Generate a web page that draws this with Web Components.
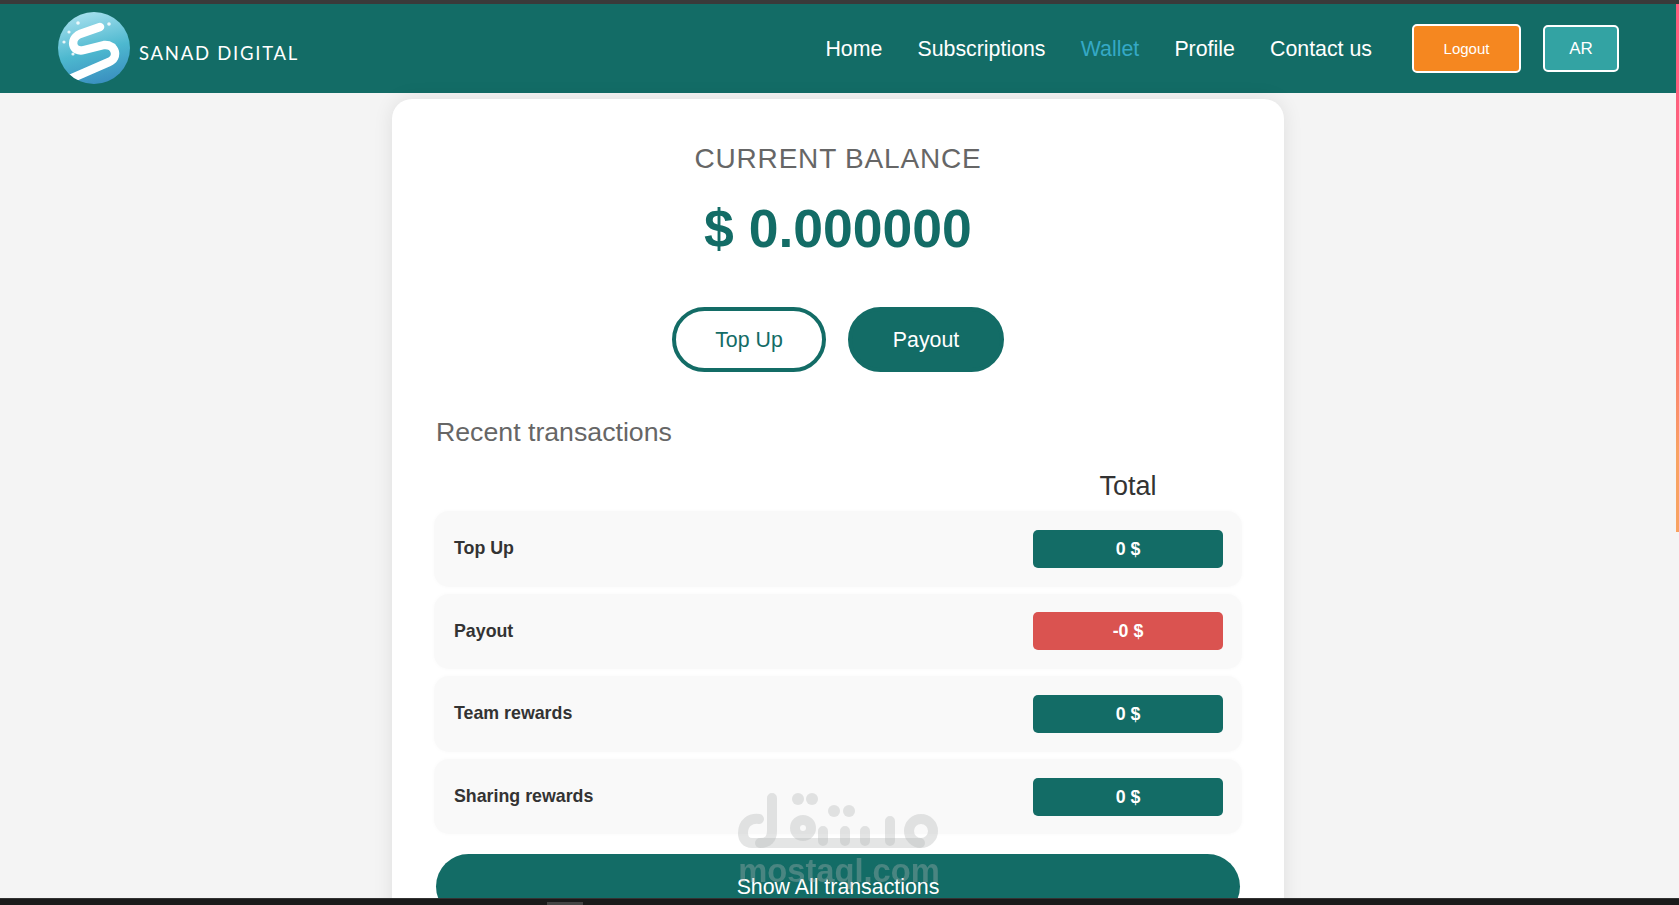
<!DOCTYPE html>
<html>
<head>
<meta charset="utf-8">
<title>Wallet</title>
<style>
    html, body {
        margin: 0;
        height: 100%;
        overflow: hidden;
        background: #f4f4f4;
        font-family: "Liberation Sans", Arial, sans-serif;
    }
    body {
        position: relative;
        padding-right: 3px;
        box-sizing: border-box;
        border-top: 4px solid #3a3a3a;
    }
</style>
</head>
<body>
    <site-header>
        <nav-link href="#">Home</nav-link>
        <nav-link href="#">Subscriptions</nav-link>
        <nav-link href="#" active>Wallet</nav-link>
        <nav-link href="#">Profile</nav-link>
        <nav-link href="#">Contact us</nav-link>
    </site-header>

    <wallet-card>
        <balance-box amount="$ 0.000000"></balance-box>
        <recent-list>
            <transaction-row label="Top Up" value="0 $"></transaction-row>
            <transaction-row label="Payout" value="-0 $" negative></transaction-row>
            <transaction-row label="Team rewards" value="0 $"></transaction-row>
            <transaction-row label="Sharing rewards" value="0 $"></transaction-row>
        </recent-list>
    </wallet-card>

    <page-chrome></page-chrome>

<script>
class SiteHeader extends HTMLElement {
    constructor() {
        super();
        this.shadowDOM = this.attachShadow({ mode: 'open' });
    }

    connectedCallback() {
        this.shadowDOM.innerHTML = `
            <style>
                :host {
                    display: flex;
                    align-items: center;
                    height: 89px;
                    background-color: #136c66;
                    padding: 0 57px 0 58px;
                    box-sizing: border-box;
                }
                .logo {
                    display: flex;
                    align-items: center;
                    flex: 1;
                }
                .logo svg {
                    width: 72px;
                    height: 72px;
                    margin-top: -1px;
                }
                .logo span {
                    margin: 9px 0 0 9px;
                    color: #fff;
                    font: 400 18.5px Lato, sans-serif;
                    letter-spacing: 1.75px;
                }
                nav {
                    display: flex;
                    gap: 35.2px;
                    margin-right: 40px;
                    margin-top: 1px;
                }
                .btn {
                    display: flex;
                    align-items: center;
                    justify-content: center;
                    box-sizing: border-box;
                    border: 2px solid #fff;
                    border-radius: 5px;
                    color: #fff;
                }
                .logout {
                    width: 109px;
                    height: 49px;
                    margin-top: -1px;
                    background-color: #f58720;
                    font-size: 15px;
                }
                .lang {
                    width: 76px;
                    height: 47px;
                    margin-left: 22px;
                    background-color: #33a3a3;
                    font-size: 17px;
                }
            </style>
            <div class="logo">
                <svg viewBox="0 0 72 72">
                    <defs>
                        <linearGradient id="ball" x1="0.35" y1="0" x2="0.6" y2="1">
                            <stop offset="0" stop-color="#a6e0ee"/>
                            <stop offset="0.55" stop-color="#4db8cf"/>
                            <stop offset="1" stop-color="#3a8fc0"/>
                        </linearGradient>
                        <clipPath id="disc"><circle cx="36" cy="36" r="36"/></clipPath>
                    </defs>
                    <circle cx="36" cy="36" r="36" fill="url(#ball)"/>
                    <g clip-path="url(#disc)">
                        <path d="M42 15 L22 22 C11 27 14 41 26 38 L46 33 C58 32 61 46 51 50 L12 67" fill="none" stroke="#fff" stroke-width="8.5" stroke-linecap="round" stroke-linejoin="round"/>
                    </g>
                    <g fill="#fff" opacity=".85">
                        <circle cx="20" cy="11" r="1.8"/>
                        <circle cx="51" cy="12" r="1.8"/>
                        <circle cx="11" cy="20" r="1.6"/>
                        <circle cx="6" cy="30" r="1.6"/>
                        <circle cx="56" cy="33" r="1.6"/>
                        <circle cx="15" cy="42" r="1.6"/>
                    </g>
                </svg>
                <span>SANAD DIGITAL</span>
            </div>
            <nav><slot></slot></nav>
            <div class="btn logout">Logout</div>
            <div class="btn lang">AR</div>
        `;
    }
}

class NavLink extends HTMLElement {
    constructor() {
        super();
        this.shadowDOM = this.attachShadow({ mode: 'open' });
    }

    connectedCallback() {
        this.shadowDOM.innerHTML = `
            <style>
                :host {
                    display: block;
                    font-size: 21.33px;
                }
                a {
                    color: #fff;
                    text-decoration: none;
                }
                :host([active]) a {
                    color: #35a9c6;
                }
            </style>
            <a href="${this.getAttribute('href')}"><slot></slot></a>
        `;
    }
}

class WalletCard extends HTMLElement {
    constructor() {
        super();
        this.shadowDOM = this.attachShadow({ mode: 'open' });
    }

    connectedCallback() {
        this.shadowDOM.innerHTML = `
            <style>
                :host {
                    display: block;
                    width: 892px;
                    height: 900px;
                    margin: 6px auto 0;
                    padding: 0 44px;
                    box-sizing: border-box;
                    background-color: #fff;
                    border-radius: 20px;
                    box-shadow: 0 0 20px rgba(0, 0, 0, 0.09);
                }
            </style>
            <slot></slot>
        `;
    }
}

class BalanceBox extends HTMLElement {
    constructor() {
        super();
        this.shadowDOM = this.attachShadow({ mode: 'open' });
    }

    connectedCallback() {
        this.shadowDOM.innerHTML = `
            <style>
                :host {
                    display: block;
                    text-align: center;
                }
                h2 {
                    margin: 0;
                    padding-top: 43px;
                    font-size: 28px;
                    line-height: 34px;
                    font-weight: 400;
                    letter-spacing: 0.8px;
                    color: #666;
                }
                .amount {
                    margin-top: 22px;
                    font-size: 53.5px;
                    line-height: 62px;
                    font-weight: 700;
                    color: #136c66;
                }
                .actions {
                    display: flex;
                    justify-content: center;
                    gap: 22px;
                    margin-top: 47px;
                }
                .actions div {
                    display: flex;
                    align-items: center;
                    justify-content: center;
                    box-sizing: border-box;
                    height: 65px;
                    padding-top: 1px;
                    border: 4px solid #136c66;
                    border-radius: 33px;
                    font-size: 21.33px;
                }
                .top {
                    width: 154px;
                    color: #136c66;
                }
                .pay {
                    width: 156px;
                    color: #fff;
                    background-color: #136c66;
                }
            </style>
            <h2>CURRENT BALANCE</h2>
            <div class="amount">${this.getAttribute('amount')}</div>
            <div class="actions">
                <div class="top">Top Up</div>
                <div class="pay">Payout</div>
            </div>
        `;
    }
}

class RecentList extends HTMLElement {
    constructor() {
        super();
        this.shadowDOM = this.attachShadow({ mode: 'open' });
    }

    connectedCallback() {
        this.shadowDOM.innerHTML = `
            <style>
                :host {
                    display: block;
                }
                h3 {
                    margin: 0;
                    padding: 43px 0 0 0;
                    font-size: 26.7px;
                    line-height: 34px;
                    font-weight: 400;
                    color: #666;
                }
                .head {
                    display: flex;
                    justify-content: flex-end;
                    padding: 19px 17px 0 0;
                    font-size: 27px;
                    line-height: 36px;
                    color: #333;
                }
                .head span {
                    width: 190px;
                    text-align: center;
                }
                .rows {
                    display: grid;
                    gap: 7px;
                    margin: 7px -2px 0 -2px;
                }
                .more {
                    display: flex;
                    justify-content: center;
                    box-sizing: border-box;
                    height: 65px;
                    margin-top: 20px;
                    padding-top: 21px;
                    border-radius: 33px;
                    background-color: #136c66;
                    color: #fff;
                    font-size: 21.33px;
                }
            </style>
            <h3>Recent transactions</h3>
            <div class="head"><span>Total</span></div>
            <div class="rows"><slot></slot></div>
            <div class="more">Show All transactions</div>
        `;
    }
}

class TransactionRow extends HTMLElement {
    constructor() {
        super();
        this.shadowDOM = this.attachShadow({ mode: 'open' });
    }

    connectedCallback() {
        this.shadowDOM.innerHTML = `
            <style>
                :host {
                    display: flex;
                    align-items: center;
                    justify-content: space-between;
                    height: 75.6px;
                    padding: 0 19px 0 20px;
                    box-sizing: border-box;
                    background-color: #f9f9f9;
                    border-radius: 15px;
                    box-shadow: 0 0 4px #f9f9f9;
                    font-size: 17.8px;
                    font-weight: 700;
                    color: #333;
                }
                .value {
                    width: 190px;
                    height: 38px;
                    line-height: 38px;
                    text-align: center;
                    border-radius: 5px;
                    background-color: #136c66;
                    color: #fff;
                }
                :host([negative]) .value {
                    background-color: #da5350;
                }
            </style>
            <span>${this.getAttribute('label')}</span>
            <span class="value">${this.getAttribute('value')}</span>
        `;
    }
}

class PageChrome extends HTMLElement {
    constructor() {
        super();
        this.shadowDOM = this.attachShadow({ mode: 'open' });
    }

    connectedCallback() {
        this.shadowDOM.innerHTML = `
            <style>
                :host {
                    display: block;
                }
                .thumb {
                    position: fixed;
                    top: 4px;
                    right: 0;
                    width: 3px;
                    height: 528px;
                    background: linear-gradient(#ff5f7e 0, #ff5f7e 55%, #f9a262 85%, #f9a262 100%);
                }
                .bottom {
                    position: fixed;
                    left: 0;
                    right: 0;
                    bottom: 0;
                    height: 7px;
                    border-top: 1px solid #333;
                    box-sizing: border-box;
                    background-color: #1a1a1a;
                }
                .bottom i {
                    position: absolute;
                    left: 547px;
                    bottom: 0;
                    width: 36px;
                    height: 3px;
                    background-color: #444;
                }
                .mark {
                    position: fixed;
                    left: 738px;
                    top: 793px;
                    width: 202px;
                    text-align: center;
                    color: rgba(177, 180, 180, 0.35);
                }
                .mark svg {
                    display: block;
                    width: 202px;
                    height: 60px;
                }
                .mark span {
                    display: block;
                    font-size: 32.7px;
                    line-height: 36px;
                    font-weight: 700;
                }
            </style>
            <div class="thumb"></div>
            <div class="mark">
                <svg viewBox="0 0 202 60" fill="none" stroke="currentColor" stroke-width="10" stroke-linecap="round" stroke-linejoin="round">
                    <path d="M34 5 V38 C34 46 30 50 22 50 H14 C8 50 5 46 5 40 C5 30 12 25 21 26"/>
                    <path d="M22 50 H182"/>
                    <circle cx="65" cy="35" r="8"/>
                    <circle cx="183" cy="38" r="12"/>
                    <path d="M85 38 V48 M107 38 V48 M127 38 V48 M152 28 V48"/>
                    <g fill="currentColor" stroke="none">
                        <circle cx="60" cy="6" r="6"/>
                        <circle cx="74" cy="6" r="6"/>
                        <circle cx="96" cy="18" r="6"/>
                        <circle cx="111" cy="18" r="6"/>
                    </g>
                </svg>
                <span>mostaql.com</span>
            </div>
            <div class="bottom"><i></i></div>
        `;
    }
}

customElements.define('nav-link', NavLink);
customElements.define('site-header', SiteHeader);
customElements.define('balance-box', BalanceBox);
customElements.define('transaction-row', TransactionRow);
customElements.define('recent-list', RecentList);
customElements.define('wallet-card', WalletCard);
customElements.define('page-chrome', PageChrome);
</script>
</body>
</html>
